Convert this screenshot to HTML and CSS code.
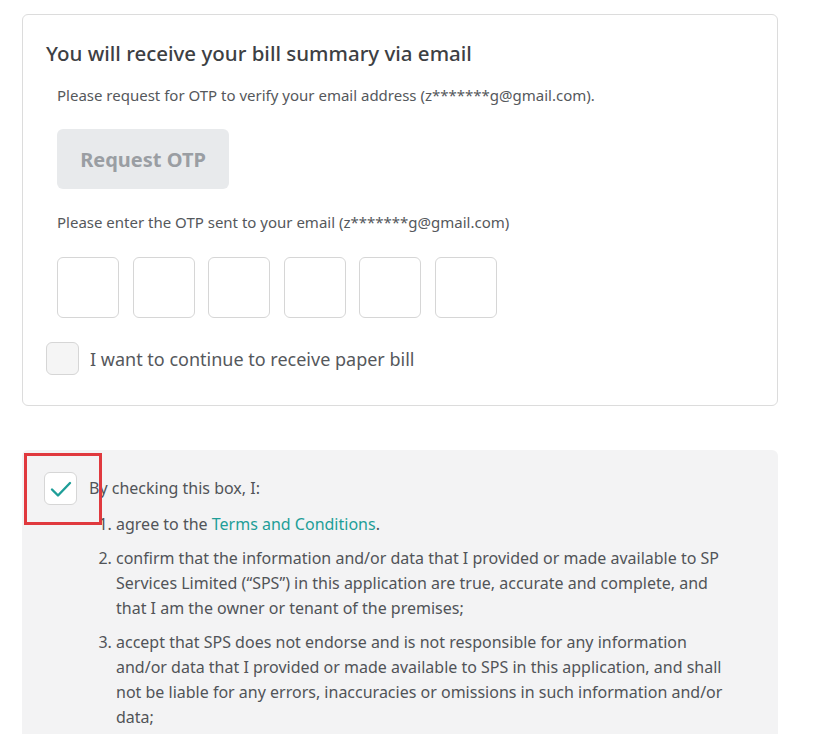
FILE: index.html
```html
<!DOCTYPE html>
<html lang="en">
<head>
  <meta charset="UTF-8">
  <meta name="viewport" content="width=device-width, initial-scale=1.0">
  <title>E-bill</title>
  <link rel="stylesheet" href="styles.css">
</head>
<body>
  <!-- email otp card -->
  <div class="card">
    <h2>You will receive your bill summary via email</h2>
    <p class="hint">Please request for OTP to verify your email address (z*******g@gmail.com).</p>
    <button class="otp-btn" type="button" disabled>Request OTP</button>
    <p class="hint">Please enter the OTP sent to your email (z*******g@gmail.com)</p>
    <div class="otp-row">
      <input class="otp-box" type="text" maxlength="1">
      <input class="otp-box" type="text" maxlength="1">
      <input class="otp-box" type="text" maxlength="1">
      <input class="otp-box" type="text" maxlength="1">
      <input class="otp-box" type="text" maxlength="1">
      <input class="otp-box" type="text" maxlength="1">
    </div>
    <label class="check-row">
      <span class="check"></span>
      <span>I want to continue to receive paper bill</span>
    </label>
  </div>

  <!-- declaration -->
  <div class="terms">
    <div class="highlight"></div>
    <div class="terms-head">
      <span class="check checked">
        <svg width="24" height="24" viewBox="0 0 24 24"><path d="M3 12.5l6 6L21 6" fill="none" stroke="#1e9e98" stroke-width="2.4" stroke-linecap="round" stroke-linejoin="round"/></svg>
      </span>
      <span>By checking this box, I:</span>
    </div>
    <ol>
      <li>agree to the <a href="#">Terms and Conditions</a>.</li>
      <li>confirm that the information and/or data that I provided or made available to SP Services Limited (“SPS”) in this application are true, accurate and complete, and that I am the owner or tenant of the premises;</li>
      <li>accept that SPS does not endorse and is not responsible for any information and/or data that I provided or made available to SPS in this application, and shall not be liable for any errors, inaccuracies or omissions in such information and/or data;</li>
    </ol>
  </div>
</body>
</html>
```

FILE: styles.css
```css
body {
  margin: 0;
  padding: 14px 42px 0 22px;
  font-family: "Noto Sans", Arial, sans-serif;
  color: #515458;
  background: #fff;
}
.card {
  border: 1px solid #dcdcdc;
  border-radius: 6px;
  padding: 24px 23px 30px 23px;
}
h2 {
  margin: 0 0 18px 0;
  font-size: 20.5px;
  font-weight: 500;
  color: #3d4043;
}
.hint {
  margin: 0 0 0 11px;
  font-size: 15px;
  color: #55585c;
}
.otp-btn {
  display: block;
  margin: 24px 0 23px 11px;
  width: 172px;
  height: 60px;
  border: none;
  border-radius: 6px;
  background: #e8eaec;
  color: #9a9ea3;
  font-family: inherit;
  font-size: 20px;
  font-weight: 700;
}
.otp-row {
  display: flex;
  gap: 13.6px;
  margin: 25px 0 24px 11px;
}
.otp-box {
  width: 62px;
  height: 61px;
  box-sizing: border-box;
  border: 1px solid #d6d6d6;
  border-radius: 6px;
}
.check-row {
  display: flex;
  align-items: center;
  gap: 11px;
  font-size: 18px;
  color: #55585c;
}
.check {
  width: 33px;
  height: 33px;
  box-sizing: border-box;
  border: 1px solid #d6d6d6;
  border-radius: 6px;
  background: #f5f5f5;
  flex-shrink: 0;
}
.check.checked {
  display: flex;
  align-items: center;
  justify-content: center;
  background: #fff;
}
.terms {
  position: relative;
  margin-top: 44px;
  background: #f3f3f4;
  border-radius: 6px 6px 0 0;
  padding: 22px 42px 20px 22px;
  font-size: 16px;
  line-height: 25px;
}
.terms-head {
  display: flex;
  align-items: center;
  gap: 12px;
}
.highlight {
  position: absolute;
  left: 2px;
  top: 3px;
  width: 72px;
  height: 66px;
  border: 3px solid #e0393e;
}
ol {
  margin: 7px 0 0 0;
  padding-left: 72px;
}
li {
  margin-bottom: 9px;
}
a {
  color: #1e9e98;
  text-decoration: none;
}
```
